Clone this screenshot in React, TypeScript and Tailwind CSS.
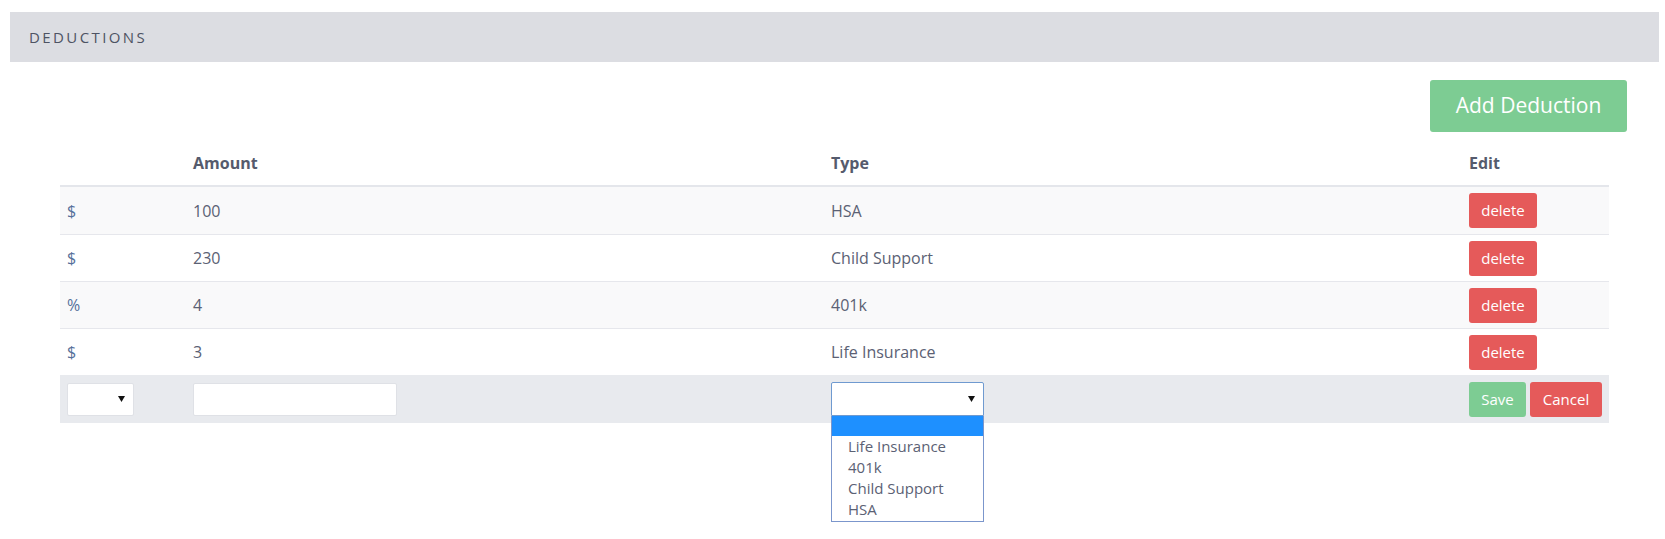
import React from "react";

const rows = [
  { unit: "$", amount: "100", type: "HSA" },
  { unit: "$", amount: "230", type: "Child Support" },
  { unit: "%", amount: "4", type: "401k" },
  { unit: "$", amount: "3", type: "Life Insurance" },
];

const options = ["Life Insurance", "401k", "Child Support", "HSA"];

const cols = "grid grid-cols-[125px_638px_638px_148px]";

function Caret() {
  return (
    <svg width="7" height="6" viewBox="0 0 7 6" className="shrink-0">
      <path d="M0 0 H7 L3.5 6 Z" fill="#111" />
    </svg>
  );
}

export default function App() {
  return (
    <div className="w-[1665px] h-[539px] bg-white font-['Open_Sans',sans-serif] text-[16px] text-[#5b6174]">
      <div className="pt-[12px] pl-[10px] w-[1659px]">
        {/* Section header */}
        <div className="h-[50px] bg-[#dcdde2] flex items-center pl-[19px]">
          <span className="text-[15px] tracking-[2.4px] text-[#4e5363]">DEDUCTIONS</span>
        </div>

        {/* Toolbar */}
        <div className="flex justify-end pt-[18px] pr-[32px]">
          <button className="w-[197px] h-[52px] rounded-[3px] bg-[#7dcc93] text-white text-[21px]">
            Add Deduction
          </button>
        </div>

        {/* Table */}
        <div className="ml-[50px] w-[1549px] mt-[9px]">
          <div className={`${cols} h-[46px] items-center font-bold text-[#555b6d] border-b-2 border-[#e4e6eb]`}>
            <div className="pl-[8px]"></div>
            <div className="pl-[8px]">Amount</div>
            <div className="pl-[8px]">Type</div>
            <div className="pl-[8px]">Edit</div>
          </div>

          {rows.map((r, i) => (
            <div
              key={i}
              className={`${cols} h-[47px] items-center ${i > 0 ? "border-t border-[#e6e7ec]" : ""} ${
                i % 2 === 0 ? "bg-[#f9f9fa]" : "bg-white"
              }`}
            >
              <div className="pl-[7px] text-[#55709a]">{r.unit}</div>
              <div className="pl-[8px]">{r.amount}</div>
              <div className="pl-[8px]">{r.type}</div>
              <div className="pl-[8px]">
                <button className="w-[68px] h-[35px] rounded-[3px] bg-[#e55a5a] text-white text-[15px]">
                  delete
                </button>
              </div>
            </div>
          ))}

          {/* Edit row */}
          <div className={`${cols} h-[48px] items-center bg-[#e8eaee]`}>
            <div className="pl-[7px]">
              <div className="w-[67px] h-[33px] bg-white border border-[#dfe1e6] rounded-[2px] flex items-center justify-end pr-[8px]">
                <Caret />
              </div>
            </div>
            <div className="pl-[8px]">
              <div className="w-[204px] h-[33px] bg-white border border-[#dfe1e6] rounded-[2px]"></div>
            </div>
            <div className="pl-[8px] relative">
              <div className="w-[153px] h-[34px] bg-white border border-[#6f9ad0] rounded-t-[2px] flex items-center justify-end pr-[8px]">
                <Caret />
              </div>
              <div className="absolute left-[8px] top-[34px] w-[153px] h-[106px] bg-white border border-[#7b96cc] border-t-0 z-10">
                <div className="h-[20px] bg-[#1e90ff]"></div>
                {options.map((o) => (
                  <div key={o} className="h-[21px] leading-[21px] pl-[16px] text-[15px] text-[#5b6174]">
                    {o}
                  </div>
                ))}
              </div>
            </div>
            <div className="pl-[8px] flex gap-[4px]">
              <button className="w-[57px] h-[35px] rounded-[3px] bg-[#7dcc93] text-white text-[15px]">Save</button>
              <button className="w-[72px] h-[35px] rounded-[3px] bg-[#e55a5a] text-white text-[15px]">Cancel</button>
            </div>
          </div>
        </div>
      </div>
    </div>
  );
}
